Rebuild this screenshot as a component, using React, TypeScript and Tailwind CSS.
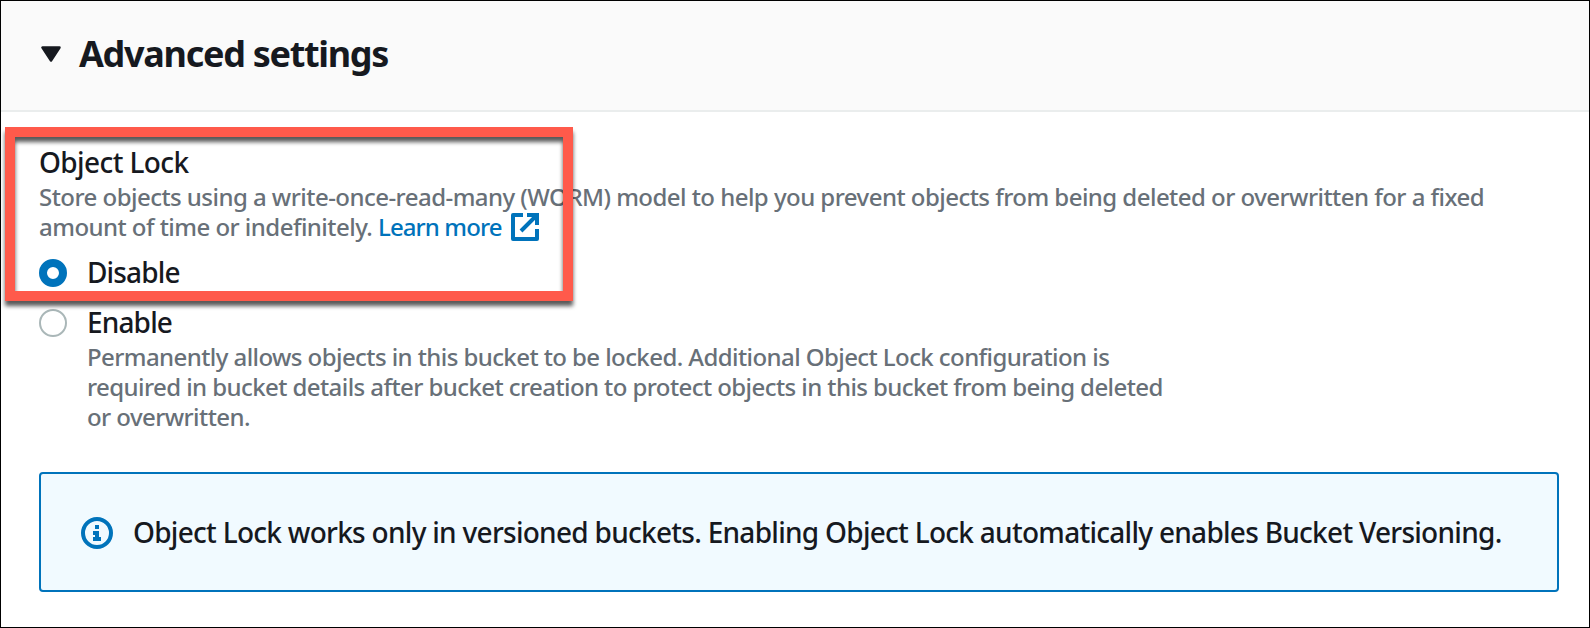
import type { ReactNode } from 'react';

const DESCRIPTION = [
	'Permanently allows objects in this bucket to be locked. Additional Object Lock configuration is',
	'required in bucket details after bucket creation to protect objects in this bucket from being deleted',
	'or overwritten.',
];

function ExternalIcon() {
	return (
		<svg className="ml-[9px] h-7 w-7 shrink-0" viewBox="0 0 28 28" fill="none" stroke="#0073bb" strokeWidth="4">
			<path d="M12 2H2v24h24V16" strokeLinejoin="round" />
			<path d="M16 2h10v10M25 3L10 18" />
		</svg>
	);
}

function InfoIcon() {
	return (
		<svg className="mt-0.5 h-8 w-8 shrink-0" viewBox="0 0 32 32" fill="none">
			<circle cx="16" cy="16" r="14" stroke="#0073bb" strokeWidth="4" />
			<path d="M14 8h4v4h-4zM12 14h6v6h2v4h-8v-4h2v-2h-2z" fill="#0073bb" />
		</svg>
	);
}

function Radio({ checked = false }: { checked?: boolean }) {
	return (
		<span
			className={`h-7 w-7 shrink-0 rounded-full bg-white ${
				checked ? 'border-8 border-[#0073bb]' : 'border-2 border-[#aab7b8]'
			}`}
		/>
	);
}

function Option({ label, checked, children }: { label: string; checked?: boolean; children?: ReactNode }) {
	return (
		<div className="flex gap-5">
			<Radio checked={checked} />
			<div>
				<div className="h-7 text-[28px] leading-[26px] tracking-[-0.85px] text-[#16191f]">{label}</div>
				{children}
			</div>
		</div>
	);
}

export default function App() {
	return (
		<main className="relative flex h-[628px] w-[1590px] flex-col overflow-hidden border border-black bg-white font-['Noto_Sans',sans-serif] font-medium whitespace-nowrap">
			<header className="flex h-[111px] items-center gap-[18px] border-b-2 border-[#eaeded] bg-[#fafafa] pb-1 pl-10">
				<svg className="h-4 w-5" viewBox="0 0 20 16">
					<path d="M1.5 1.5h17L10 14.5z" fill="#16191f" stroke="#16191f" strokeWidth="2.5" strokeLinejoin="round" />
				</svg>
				<h1 className="text-4xl font-bold tracking-[-1.3px] text-[#16191f]">Advanced settings</h1>
			</header>

			<section className="flex flex-col pt-9 pl-[38px]">
				<h2 className="h-[34px] text-[28px] leading-7 tracking-[-0.6px] text-[#16191f]">Object Lock</h2>
				<p className="text-2xl leading-[30px] tracking-[-0.54px] text-[#687078]">
					<span className="block h-[30px]">
						Store objects using a write-once-read-many (WORM) model to help you prevent objects from being deleted or overwritten for a fixed
					</span>
					<span className="flex h-[30px] items-center">
						<span>amount of time or indefinitely.&nbsp;</span>
						<a className="tracking-[-0.9px] text-[#0073bb]">Learn more</a>
						<ExternalIcon />
					</span>
				</p>

				<div className="mt-[17px] flex flex-col gap-[22px]">
					<Option label="Disable" checked />
					<Option label="Enable">
						<div className="mt-[5px] text-2xl leading-[30px] tracking-[-0.58px] text-[#687078]">
							{DESCRIPTION.map((line) => (
								<p key={line}>{line}</p>
							))}
						</div>
					</Option>
				</div>

				<div className="mt-10 flex h-[120px] w-[1520px] items-center gap-5 rounded border-2 border-[#0073bb] bg-[#f1faff] pl-10">
					<InfoIcon />
					<p className="text-[28px] tracking-[-0.72px] text-[#16191f]">
						Object Lock works only in versioned buckets. Enabling Object Lock automatically enables Bucket Versioning.
					</p>
				</div>
			</section>

			{/* callout frame over the Object Lock block */}
			<div className="absolute top-[126px] left-1 h-[174px] w-[568px] border-10 border-[#ff5a4b] drop-shadow-[0_5px_2px_rgba(0,0,0,0.65)]" />
		</main>
	);
}
